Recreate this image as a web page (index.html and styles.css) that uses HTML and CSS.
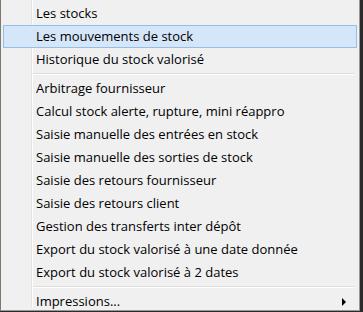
FILE: index.html
```html
<!DOCTYPE html>
<html>
<head>
<meta charset="utf-8">
<link rel="stylesheet" href="styles.css">
</head>
<body>
<div class="menu">
  <div class="gutter"></div>
  <ul class="items">
    <li class="item">Les stocks</li>
    <li class="item active">Les mouvements de stock</li>
    <li class="item">Historique du stock valorisé</li>
    <li class="sep"></li>
    <li class="item">Arbitrage fournisseur</li>
    <li class="item">Calcul stock alerte, rupture, mini réappro</li>
    <li class="item">Saisie manuelle des entrées en stock</li>
    <li class="item">Saisie manuelle des sorties de stock</li>
    <li class="item">Saisie des retours fournisseur</li>
    <li class="item">Saisie des retours client</li>
    <li class="item">Gestion des transferts inter dépôt</li>
    <li class="item">Export du stock valorisé à une date donnée</li>
    <li class="item">Export du stock valorisé à 2 dates</li>
    <li class="sep"></li>
    <li class="item sub">Impressions...<span class="arrow"></span></li>
  </ul>
</div>
</body>
</html>
```
FILE: styles.css
```css
html, body {
  margin: 0;
  padding: 0;
  background: #2b2b2b;
  width: 363px;
  height: 312px;
  overflow: hidden;
}
.menu {
  position: relative;
  width: 358px;
  height: 310px;
  background: #f0f0f0;
  border-left: 1px solid #7b7a6c;
  border-right: 1px solid #979797;
  border-bottom: 1px solid #979797;
  font-family: "Open Sans", "Noto Sans", sans-serif;
  font-size: 13px;
  color: #000;
}
.gutter {
  position: absolute;
  left: 30px;
  top: 0;
  bottom: 3px;
  width: 1px;
  background: #e2e3e3;
  border-right: 1px solid #ffffff;
}
.items {
  list-style: none;
  margin: 0;
  padding: 2px 2px 0 2px;
}
.item {
  position: relative;
  height: 23px;
  line-height: 21px;
  padding-left: 32px;
  border: 1px solid transparent;
  box-sizing: border-box;
}
.item.active {
  background: #d5e6f8;
  border-color: #92c0ec;
}
.sep {
  height: 6px;
  margin-left: 30px;
  margin-right: 3px;
  position: relative;
}
.sep::after {
  content: "";
  position: absolute;
  left: 0;
  right: 0;
  top: 2px;
  height: 1px;
  background: #e0dcdc;
  border-bottom: 1px solid #ffffff;
}
.arrow {
  position: absolute;
  right: 10px;
  top: 7px;
  width: 0;
  height: 0;
  border-top: 4px solid transparent;
  border-bottom: 4px solid transparent;
  border-left: 4px solid #000;
}
```
